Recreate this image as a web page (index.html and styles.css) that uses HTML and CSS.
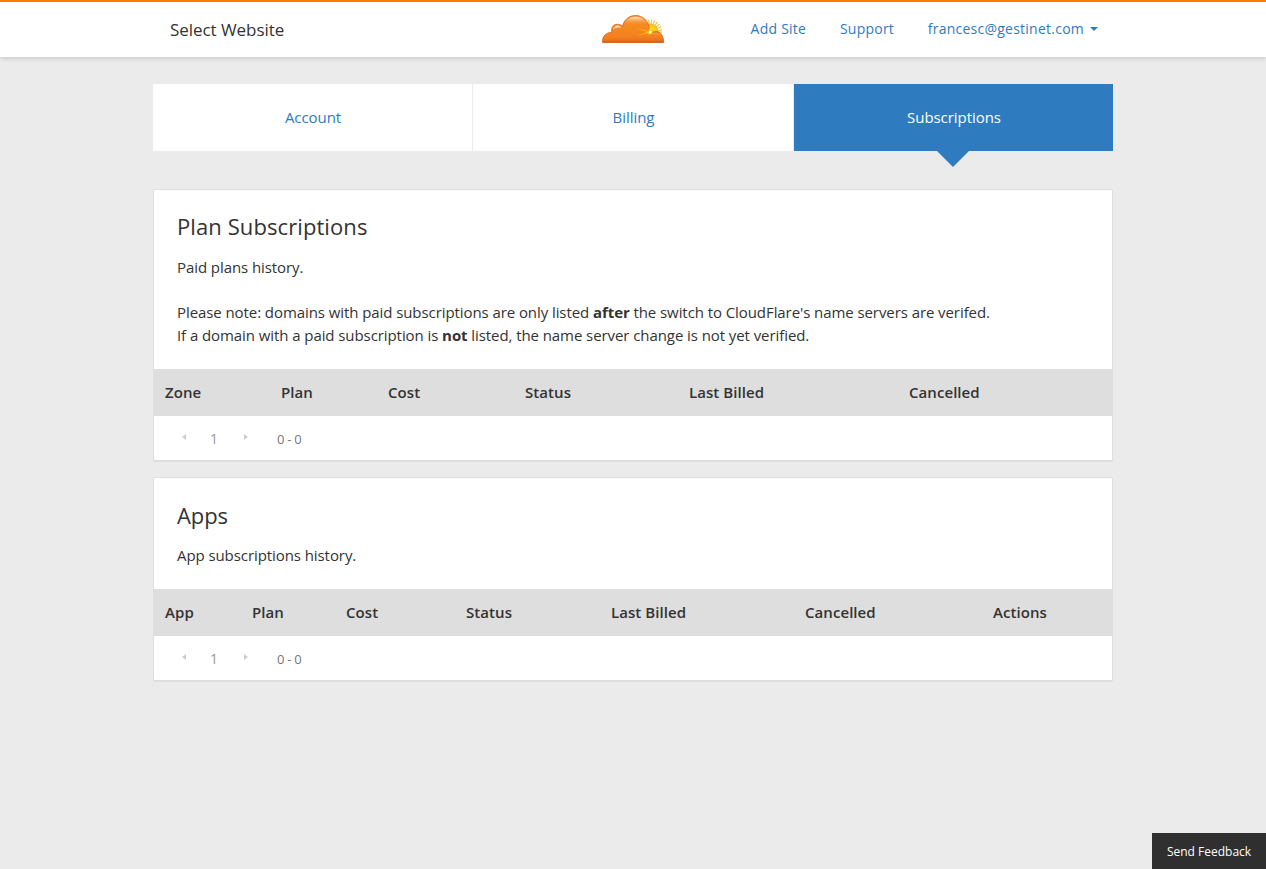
FILE: index.html
```html
<!DOCTYPE html>
<html lang="en">
<head>
<meta charset="utf-8">
<title>Subscriptions</title>
<link rel="stylesheet" href="styles.css">
</head>
<body>
<header class="topbar">
  <div class="topbar-inner">
    <a class="site-select">Select Website</a>
    <svg class="logo" viewBox="0 0 64 30" width="64" height="30">
      <defs>
        <linearGradient id="cloud" x1="0" y1="0" x2="0" y2="1">
          <stop offset="0" stop-color="#f79a4c"/><stop offset=".35" stop-color="#f68a1f"/><stop offset=".8" stop-color="#f38020"/><stop offset="1" stop-color="#dd6a20"/>
        </linearGradient>
        <linearGradient id="shine" x1="0" y1="0" x2="0" y2="1">
          <stop offset="0" stop-color="#fde3c8"/><stop offset="1" stop-color="#f68a1f" stop-opacity="0"/>
        </linearGradient>
        <radialGradient id="sun"><stop offset="0" stop-color="#fff04a"/><stop offset=".6" stop-color="#fbd50b"/><stop offset="1" stop-color="#f3b73a"/></radialGradient>
      </defs>
      <circle cx="49.300" cy="17.500" r="8" fill="url(#sun)"/>
      <circle cx="49.300" cy="17.500" r="9.500" fill="none" stroke="#f3ba35" stroke-width="4.500" stroke-dasharray="1 1.500"/>
      <path fill="url(#cloud)" stroke="#d96a20" stroke-width=".9" d="M1.500 28.500C1 22.500 5 18.200 10.800 18.500 10 13 12.500 10.300 16.200 10.300c2 0 3.800.7 5.300 2C23 6 28 1.500 34.500 1.500 41.500 1.500 47 6.500 48.200 13.500l1.300 6c1-1.300 3.300-2 5.500-2 4.500 0 7.500 4 7.700 11z"/>
      <path fill="url(#shine)" d="M23 11C25 5.500 29.500 2.700 34.500 2.700c6 0 10.500 3.300 12 8.300-7-3.500-15-2.500-23.500 0z"/>
      <path fill="url(#shine)" d="M12 16c.2-4.500 5-6 8.500-2.500-3-.3-6 .2-8.500 2.500zM3 24c1-3 4-4.500 8-4-4 1-6 2-8 4zM52 19.300c4-1.500 8 .7 9.300 5.200-2.300-2.500-5-3.200-8-3z"/>
      <path fill="#fcb80d" d="M34 14.500l13.500 2.300.5-3.500 1.500 3.200 3.500-2-2 3.700 1.500 2-3-.5-1.500 2-1-2.300L36 21.500l10.500-3.700z"/>
      <circle cx="49.300" cy="18" r="1.500" fill="#fffde0"/>
      <path fill="#c95a1c" d="M2 27.300h60v1.200H2z" opacity=".5"/>
    </svg>
    <nav class="topnav">
      <a>Add Site</a>
      <a>Support</a>
      <a>francesc@gestinet.com<span class="caret"></span></a>
    </nav>
  </div>
</header>
<main class="content">
  <nav class="tabs">
    <a class="tab">Account</a>
    <a class="tab">Billing</a>
    <a class="tab active">Subscriptions</a>
  </nav>
  <section class="card">
    <div class="card-body">
      <h2>Plan Subscriptions</h2>
      <p>Paid plans history.<br><br>Please note: domains with paid subscriptions are only listed <strong>after</strong> the switch to CloudFlare's name servers are verifed.<br>If a domain with a paid subscription is <strong>not</strong> listed, the name server change is not yet verified.</p>
    </div>
    <div class="table-head plans">
      <span>Zone</span><span>Plan</span><span>Cost</span><span>Status</span><span>Last Billed</span><span>Cancelled</span>
    </div>
    <div class="pager"><i class="prev"></i><span class="page">1</span><i class="next"></i><span class="range">0 - 0</span></div>
  </section>
  <section class="card">
    <div class="card-body apps-body">
      <h2>Apps</h2>
      <p>App subscriptions history.</p>
    </div>
    <div class="table-head apps">
      <span>App</span><span>Plan</span><span>Cost</span><span>Status</span><span>Last Billed</span><span>Cancelled</span><span>Actions</span>
    </div>
    <div class="pager"><i class="prev"></i><span class="page">1</span><i class="next"></i><span class="range">0 - 0</span></div>
  </section>
</main>
<a class="feedback">Send Feedback</a>
</body>
</html>
```
FILE: styles.css
```css
* { box-sizing: border-box; }
body {
  margin: 0;
  min-height: 869px;
  background: #ebebeb;
  color: #333;
  font: 15px/22.5px "Open Sans", sans-serif;
}
.topbar {
  height: 57px;
  background: #fff;
  border-top: 2px solid #ff7900;
  box-shadow: 0 1px 5px rgba(0, 0, 0, .18);
}
.topbar-inner {
  width: 960px;
  height: 55px;
  margin: 0 auto;
  padding: 0 15px 0 17px;
  display: grid;
  grid-template-columns: 431px 64px 1fr;
  align-items: start;
}
.site-select { font-size: 17px; line-height: 24px; padding-top: 16px; letter-spacing: -.05px; }
.logo { display: block; margin-top: 12px; }
.topnav {
  display: flex;
  justify-content: flex-end;
  gap: 33.7px;
  padding-top: 16px;
  font-size: 14px;
  letter-spacing: .24px;
  color: #2f7bbf;
}
.caret {
  display: inline-block;
  margin-left: 6px;
  vertical-align: 3px;
  border: 4px solid transparent;
  border-top-color: #2f7bbf;
  border-bottom: 0;
}
.content { width: 960px; margin: 27px auto 0; }
.tabs {
  display: grid;
  grid-template-columns: 319px 320px 319px;
  gap: 1px;
  height: 67px;
  margin-bottom: 39px;
}
.tab {
  display: flex;
  align-items: center;
  justify-content: center;
  padding-left: 1px;
  background: #fff;
  color: #2f7bbf;
  letter-spacing: -.06px;
}
.tab.active { position: relative; background: #2f7bbf; color: #fff; }
.tab.active::after {
  content: "";
  position: absolute;
  top: 100%;
  left: 50%;
  margin-left: -16.5px;
  border: 16px solid transparent;
  border-top-color: #2f7bbf;
  border-bottom: 0;
}
.card {
  margin: 0 1px 18px;
  background: #fff;
  box-shadow: 0 0 0 1px #dedede, 0 1px 0 1px #dedede;
  border-radius: 1px;
}
.card-body { height: 179px; padding: 21px 23px 0; }
.apps-body { height: 111px; padding-top: 22px; }
h2 { margin: 0 0 15px; font-size: 22px; line-height: 30px; font-weight: 400; letter-spacing: .09px; }
.apps-body h2 { margin-bottom: 14px; letter-spacing: -.1px; }
p { margin: 0; letter-spacing: -.077px; }
.table-head {
  display: grid;
  align-items: center;
  height: 47px;
  padding-left: 11px;
  background: #dedede;
  font-weight: 600;
  letter-spacing: .06px;
}
.plans { grid-template-columns: 116px 107px 137px 164px 220px 1fr; }
.apps { grid-template-columns: 87px 94px 120px 145px 194px 188px 1fr; }
.pager { display: flex; align-items: center; height: 44px; padding: 2px 0 0 28px; color: #999; font-size: 14px; }
.prev, .next { border: 3.5px solid transparent; margin-bottom: 5px; }
.prev { border-left: 0; border-right: 4px solid #ccc; }
.next { border-right: 0; border-left: 4px solid #ccc; }
.page { width: 8px; margin: 0 26px 0 24px; }
.range { margin-left: 29px; font-size: 13px; letter-spacing: -.25px; color: #777; }
.feedback {
  position: fixed;
  right: 0;
  bottom: 0;
  width: 114px;
  height: 36px;
  background: #2f2f2f;
  color: #fff;
  font-size: 12px;
  line-height: 37px;
  text-align: center;
}
```
